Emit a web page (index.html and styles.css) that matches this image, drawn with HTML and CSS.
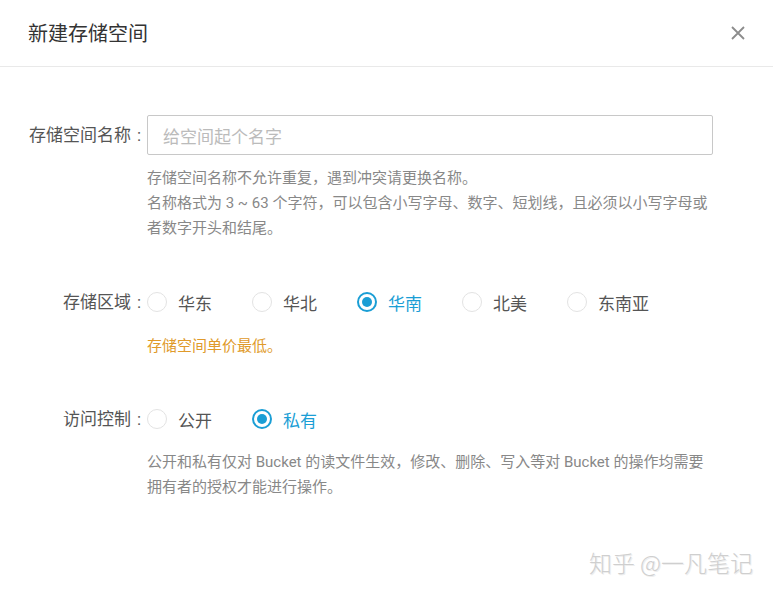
FILE: index.html
```html
<!DOCTYPE html>
<html lang="zh-CN">
<head>
  <meta charset="UTF-8">
  <meta name="viewport" content="width=device-width, initial-scale=1.0">
  <title>新建存储空间</title>
  <link rel="stylesheet" href="styles.css">
</head>
<body>
  <div class="dialog">
    <div class="dialog-header">
      <h2>新建存储空间</h2>
      <button class="close-btn" aria-label="关闭">
        <svg width="14" height="14" viewBox="0 0 14 14">
          <path d="M1 1 L13 13 M13 1 L1 13" stroke="#8c8c8c" stroke-width="1.8" fill="none"/>
        </svg>
      </button>
    </div>

    <div class="dialog-body">
      <div class="form-row row-name">
        <label class="form-label">存储空间名称<span class="colon">:</span></label>
        <div class="form-field">
          <input class="text-input" type="text" placeholder="给空间起个名字">
          <p class="hint">存储空间名称不允许重复，遇到冲突请更换名称。<br>名称格式为 3 ~ 63 个字符，可以包含小写字母、数字、短划线，且必须以小写字母或<br>者数字开头和结尾。</p>
        </div>
      </div>

      <div class="form-row row-region">
        <label class="form-label">存储区域<span class="colon">:</span></label>
        <div class="form-field">
          <div class="radio-group">
            <span class="radio"><i class="dot"></i>华东</span>
            <span class="radio"><i class="dot"></i>华北</span>
            <span class="radio checked"><i class="dot"></i>华南</span>
            <span class="radio"><i class="dot"></i>北美</span>
            <span class="radio"><i class="dot"></i>东南亚</span>
          </div>
          <p class="hint warn">存储空间单价最低。</p>
        </div>
      </div>

      <div class="form-row row-acl">
        <label class="form-label">访问控制<span class="colon">:</span></label>
        <div class="form-field">
          <div class="radio-group">
            <span class="radio"><i class="dot"></i>公开</span>
            <span class="radio checked"><i class="dot"></i>私有</span>
          </div>
          <p class="hint">公开和私有仅对 Bucket 的读文件生效，修改、删除、写入等对 Bucket 的操作均需要<br>拥有者的授权才能进行操作。</p>
        </div>
      </div>
    </div>

    <div class="watermark">知乎 @一凡笔记</div>
  </div>
</body>
</html>
```

FILE: styles.css
```css
body {
  margin: 0;
  background: #fff;
  font-family: Roboto, "Noto Sans CJK SC", sans-serif;
  color: #555;
}

.dialog {
  position: relative;
  width: 773px;
  height: 595px;
  overflow: hidden;
}

.dialog-header {
  display: flex;
  align-items: center;
  justify-content: space-between;
  height: 66px;
  padding: 0 28px;
  border-bottom: 1px solid #e9e9e9;
}

.dialog-header h2 {
  margin: 0;
  font-size: 20px;
  font-weight: normal;
  color: #333;
  margin-top: -2px;
}

.close-btn {
  border: none;
  background: none;
  padding: 0;
  width: 14px;
  height: 14px;
  cursor: pointer;
}

.close-btn svg {
  display: block;
}

.form-row {
  display: grid;
  grid-template-columns: 147px 566px;
  align-items: start;
}

.form-label {
  text-align: right;
  font-size: 17px;
  color: #555;
  line-height: 40px;
}

.colon {
  display: inline-block;
  width: 16px;
  text-align: center;
}

.row-name {
  margin-top: 48px;
}

.row-region {
  margin-top: 46px;
}

.row-acl {
  margin-top: 45px;
}

.row-region .form-label,
.row-acl .form-label {
  line-height: 30px;
}

.text-input {
  display: block;
  box-sizing: border-box;
  width: 566px;
  height: 40px;
  border: 1px solid #c8c8c8;
  border-radius: 2px;
  padding: 0 15px;
  font-family: "Noto Sans CJK SC", sans-serif;
  font-size: 17px;
  color: #333;
  outline: none;
}

.text-input::placeholder {
  color: #bbb;
}

.hint {
  margin: 11px 0 0;
  font-size: 15px;
  line-height: 25px;
  color: #888;
}

.hint.warn {
  color: #e09a2a;
  margin-top: 17px;
}

.row-acl .hint {
  margin-top: 16px;
}

.radio-group {
  display: flex;
  height: 30px;
  align-items: center;
}

.radio {
  display: flex;
  align-items: center;
  gap: 11px;
  margin-right: 40px;
  font-size: 17px;
  color: #555;
}

.dot {
  box-sizing: border-box;
  width: 20px;
  height: 20px;
  border: 1px solid #e3e3e3;
  border-radius: 50%;
  display: flex;
  align-items: center;
  justify-content: center;
}

.radio.checked {
  color: #1a9ed5;
}

.radio.checked .dot {
  border: 2px solid #1a9ed5;
}

.radio.checked .dot::after {
  content: "";
  width: 10px;
  height: 10px;
  border-radius: 50%;
  background: #1a9ed5;
}

.watermark {
  position: absolute;
  right: 20px;
  bottom: 16px;
  font-family: "Noto Sans CJK SC", sans-serif;
  font-size: 23px;
  font-weight: 300;
  color: #cfcfcf;
  text-shadow: 1px 1px 0 #eee;
}
```
